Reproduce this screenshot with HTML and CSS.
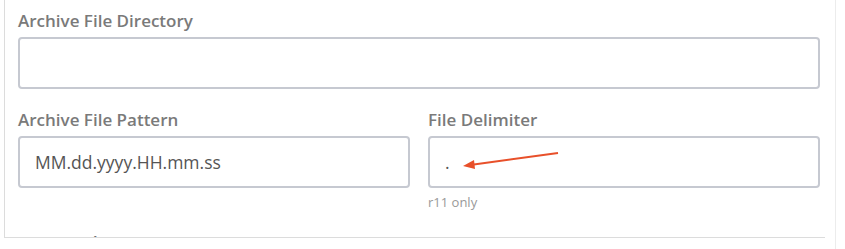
FILE: index.html
```html
<!DOCTYPE html>
<html lang="en">
<head>
    <meta charset="UTF-8">
    <meta name="viewport" content="width=device-width, initial-scale=1.0">
    <title>Archive Settings</title>
    <link rel="stylesheet" href="styles.css">
</head>
<body>
    <div class="page">
        <div class="panel">
            <div class="form-group">
                <label for="archive-dir">Archive File Directory</label>
                <input type="text" id="archive-dir" name="archive-dir">
            </div>
            <div class="form-row">
                <div class="form-group">
                    <label for="archive-pattern">Archive File Pattern</label>
                    <input type="text" id="archive-pattern" name="archive-pattern" value="MM.dd.yyyy.HH.mm.ss">
                </div>
                <div class="form-group">
                    <label for="file-delimiter">File Delimiter</label>
                    <div class="field-wrap">
                        <input type="text" id="file-delimiter" name="file-delimiter" value=".">
                        <!-- annotation arrow pointing at the delimiter -->
                        <svg class="callout" width="140" height="40" viewBox="0 0 140 40">
                            <line x1="130" y1="17" x2="44" y2="28.8" stroke="#e8502a" stroke-width="2"/>
                            <polygon points="35,30 46,24 47,33" fill="#e8502a"/>
                        </svg>
                    </div>
                    <div class="hint">r11 only</div>
                </div>
            </div>
            <h2 class="section-title">Connection</h2>
        </div>
        <div class="edge"></div>
    </div>
</body>
</html>
```

FILE: styles.css
```css
body {
    margin: 0;
    padding: 0;
    background: #fff;
    font-family: "Open Sans", Arial, sans-serif;
}
.page {
    display: flex;
    height: 100vh;
}
.panel {
    margin-left: 4px;
    width: 821px;
    height: 238px;
    box-sizing: border-box;
    padding: 10px 5px 0 13px;
    border-left: 1px solid #dcdcdc;
    border-bottom: 1px solid #dcdcdc;
    overflow: hidden;
}
.edge {
    margin-left: 10px;
    width: 1px;
    background: #ececec;
}
.form-group {
    margin-bottom: 20px;
}
.form-group label {
    display: block;
    font-size: 17px;
    line-height: 21px;
    font-weight: 600;
    color: #7a7a7a;
    margin-bottom: 6px;
}
.form-group input {
    display: block;
    width: 100%;
    height: 52px;
    box-sizing: border-box;
    padding: 0 15px;
    border: 2px solid #c6c9d1;
    border-radius: 4px;
    font-family: "Open Sans", Arial, sans-serif;
    font-size: 17.5px;
    color: #555;
    background: #fff;
    outline: none;
}
.form-row {
    display: grid;
    grid-template-columns: 1fr 1fr;
    column-gap: 18px;
}
.form-row .form-group {
    margin-bottom: 0;
}
.field-wrap {
    position: relative;
}
.callout {
    position: absolute;
    left: 0;
    top: 0;
}
.hint {
    margin-top: 6px;
    font-size: 13px;
    line-height: 16px;
    color: #999;
}
.section-title {
    margin: 21px 0 0 3px;
    font-size: 18px;
    line-height: 24px;
    font-weight: 600;
    color: #666;
}
```
